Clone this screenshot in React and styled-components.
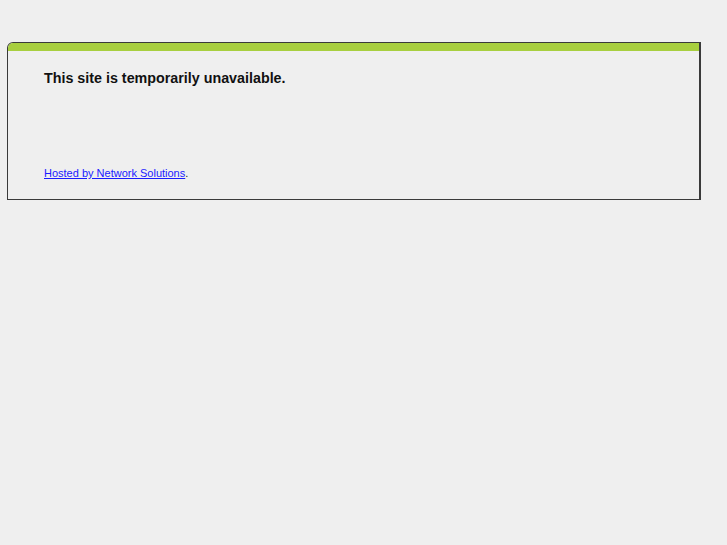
import styled, { createGlobalStyle } from 'styled-components'

const Global = createGlobalStyle`
  html, body {
    margin: 0;
    background: #efefef;
  }
  body {
    padding: 42px 26px 0 7px;
    font-family: "Liberation Sans", Arial, sans-serif;
  }
`

const Panel = styled.div`
  width: 691px;
  border: 1px solid #3a3a3a;
  border-right-width: 2px;
  border-top-left-radius: 6px;
  overflow: hidden;
  background: #efefef;
`

const Band = styled.div`
  height: 8px;
  background: #a8cf3f;
`

const Body = styled.div`
  padding: 19px 36px 20px 36px;
`

const Title = styled.h1`
  margin: 0;
  font-size: 14.3px;
  font-weight: bold;
  color: #111;
`

const Footer = styled.p`
  margin: 81px 0 0;
  font-size: 11px;
  color: #222;

  a {
    color: #1a1aff;
  }
`

export default function App() {
  return (
    <>
      <Global />
      <Panel>
        <Band />
        <Body>
          <Title>This site is temporarily unavailable.</Title>
          <Footer>
            <a href="#">Hosted by Network Solutions</a>.
          </Footer>
        </Body>
      </Panel>
    </>
  )
}
